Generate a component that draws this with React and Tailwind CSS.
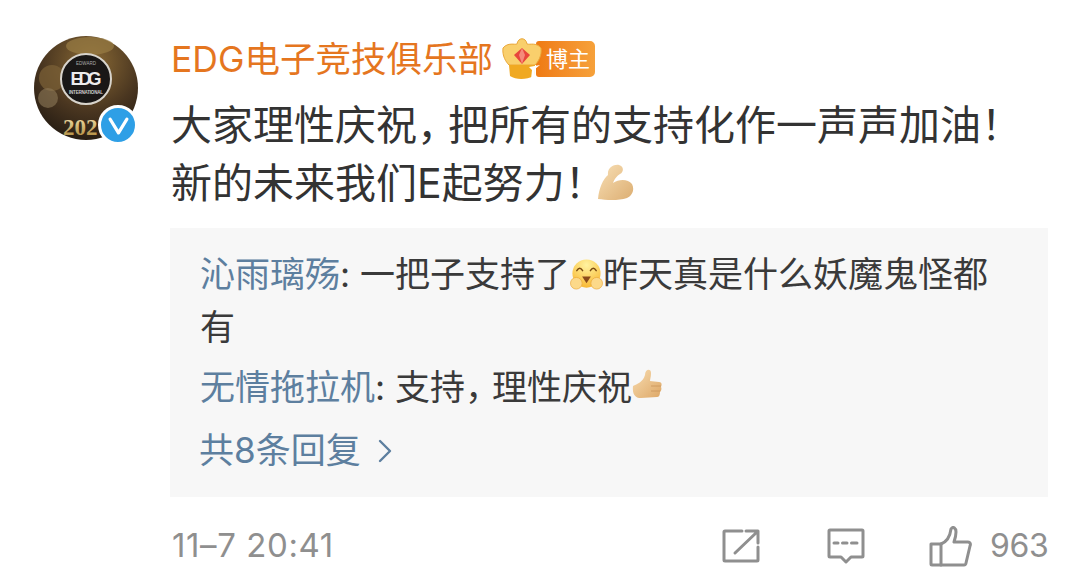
import React from "react";

const cjk = "font-['Inter','Noto_Sans_CJK_SC',sans-serif]";

function Avatar() {
  return (
    <div className="relative w-[104px] h-[104px] shrink-0">
      <svg viewBox="0 0 104 104" className="w-[104px] h-[104px]">
        <defs>
          <radialGradient id="bg" cx="0.55" cy="0.25" r="0.85">
            <stop offset="0" stopColor="#8a6a35" />
            <stop offset="0.55" stopColor="#4a3620" />
            <stop offset="1" stopColor="#1d1610" />
          </radialGradient>
          <linearGradient id="gold" x1="0" y1="0" x2="0" y2="1">
            <stop offset="0" stopColor="#f6e7b4" />
            <stop offset="1" stopColor="#a9802f" />
          </linearGradient>
        </defs>
        <circle cx="52" cy="52" r="52" fill="url(#bg)" />
        <circle cx="18" cy="42" r="13" fill="#7d6238" opacity="0.7" />
        <circle cx="14" cy="62" r="10" fill="#8d7a58" opacity="0.6" />
        <ellipse cx="56" cy="10" rx="24" ry="9" fill="#9a7e45" opacity="0.7" />
        <circle cx="52" cy="43" r="25" fill="#191716" stroke="#d8d4cc" strokeWidth="2" />
        <text x="52" y="29" textAnchor="middle" fontSize="4.5" fill="#aaa" fontFamily="Liberation Sans">
          EDWARD
        </text>
        <text x="52" y="49" textAnchor="middle" fontSize="18" fontWeight="700" fill="#ececec" fontFamily="Liberation Sans" textLength="31">
          EDG
        </text>
        <text x="52" y="58" textAnchor="middle" fontSize="4.5" fontWeight="700" fill="#ccc" fontFamily="Liberation Sans" textLength="34">
          INTERNATIONAL
        </text>
        <text x="29" y="99" fontSize="23" fontWeight="700" fill="url(#gold)" fontFamily="Liberation Serif">
          202
        </text>
      </svg>
      <div className="absolute left-[64px] top-[69px] w-[40px] h-[40px] rounded-full bg-[#2e9fe6] border-[3px] border-white flex items-center justify-center">
        <svg viewBox="0 0 24 24" className="w-[25px] h-[25px]" fill="none" stroke="white" strokeWidth="3.2" strokeLinecap="round" strokeLinejoin="round">
          <path d="M4 6 L12 19 L20 6" />
        </svg>
      </div>
    </div>
  );
}

function Crown() {
  return (
    <svg viewBox="0 0 40 45" className="w-[40px] h-[45px] -mr-[6px] mt-[-4px] relative z-10 shrink-0">
      <path d="M1 12 C6 6 13 9 15 8 C16 1 24 1 25 8 C28 9 34 6 39 12 C40 20 36 26 33 29 L7 29 C4 26 0 20 1 12Z" fill="#f9cf6c" stroke="#eaa73a" />
      <path d="M7 29 H33 L32 40 C24 44 14 44 8 40Z" fill="#f0a922" />
      <path d="M20 12 L28 19 L20 28 L12 19Z" fill="#e8453c" />
      <path d="M20 12 L23 19 L20 28 L17 19Z" fill="#f58a7a" />
      <path d="M27 31 L38 29 L33 33 L32 43 L29 43 L30 34Z" fill="#fff" />
    </svg>
  );
}

function Muscle() {
  return (
    <svg viewBox="0 0 38 36" className="w-[38px] h-[36px] ml-[18px] mt-[-2px]">
      <defs>
        <linearGradient id="arm" x1="0" y1="0" x2="1" y2="1">
          <stop offset="0" stopColor="#f8dfb5" />
          <stop offset="1" stopColor="#dcae72" />
        </linearGradient>
      </defs>
      <path d="M1 35 C2 24 6 15 11 11 C10 4 17 0 22 1 C27 2 27 8 23 10 C20 12 18 14 16 19 C22 15 31 15 35 20 C38 26 35 32 30 34 C21 37 9 36 1 35Z" fill="url(#arm)" />
    </svg>
  );
}

function Hug() {
  return (
    <svg viewBox="0 0 34 34" className="inline-block w-[33px] h-[33px] align-[-5px]">
      <defs>
        <radialGradient id="face" cx="0.5" cy="0.2" r="0.85">
          <stop offset="0" stopColor="#fff3a0" />
          <stop offset="1" stopColor="#f8b52e" />
        </radialGradient>
      </defs>
      <circle cx="17" cy="15" r="14.5" fill="url(#face)" />
      <path d="M7 12 Q10 7 13 12 M21 12 Q24 7 27 12" fill="none" stroke="#7a4a12" strokeWidth="1.5" strokeLinecap="round" />
      <path d="M12.5 18 H21.5 L17 25Z" fill="#8a4a1a" />
      <ellipse cx="6.5" cy="25" rx="6" ry="6" fill="#fcd98a" stroke="#eaa73a" strokeWidth="0.7" />
      <ellipse cx="27.5" cy="25" rx="6" ry="6" fill="#fcd98a" stroke="#eaa73a" strokeWidth="0.7" />
    </svg>
  );
}

function ThumbEmoji() {
  return (
    <svg viewBox="0 0 30 30" className="inline-block w-[30px] h-[30px] align-[1px]">
      <defs>
        <linearGradient id="hand" x1="0" y1="0" x2="1" y2="1">
          <stop offset="0" stopColor="#f8dcb0" />
          <stop offset="1" stopColor="#dda766" />
        </linearGradient>
      </defs>
      <path d="M1 17 C5 15 11 13 13 6 C13 0 19 -1 19 4 C19 8 18 10 18 12 L27 13 C30 13 30 16 29 18 C30 20 29 22 28 23 C28 26 27 28 25 28 L9 29 C4 29 0 26 1 17Z" fill="url(#hand)" />
      <path d="M19 17 H29 M19 22 H28" stroke="#c9965c" strokeWidth="0.8" fill="none" />
    </svg>
  );
}

function ShareIcon() {
  return (
    <svg viewBox="0 0 38 34" className="w-[38px] h-[34px]" fill="none" stroke="#8f8f8f" strokeWidth="3" strokeLinecap="round" strokeLinejoin="round">
      <path d="M20 2 H3 Q2 2 2 3 V31 Q2 32 3 32 H35 Q36 32 36 31 V18" />
      <path d="M13 24 L35 3 M24 2 H36 V14" />
    </svg>
  );
}

function CommentIcon() {
  return (
    <svg viewBox="0 0 38 36" className="w-[38px] h-[36px]" fill="none" stroke="#8f8f8f" strokeWidth="3" strokeLinecap="round" strokeLinejoin="round">
      <path d="M3 2 H35 Q36 2 36 3 V28 Q36 29 35 29 H24 L19 34 L14 29 H3 Q2 29 2 28 V3 Q2 2 3 2Z" />
      <path d="M7 15 H11 M15.5 15 H20 M24.5 15 H30" />
    </svg>
  );
}

function LikeIcon() {
  return (
    <svg viewBox="0 0 43 41" className="w-[43px] h-[41px]" fill="none" stroke="#8f8f8f" strokeWidth="3" strokeLinecap="round" strokeLinejoin="round">
      <path d="M2 18 H12 V39 H3 Q2 39 2 38Z" />
      <path d="M12 18 C17 16 21 11 22 3 C24 0 27 2 27 6 C27 10 26 13 25 16 H39 C41 16 42 18 41 20 L37 37 C37 38 36 39 35 39 H12" />
    </svg>
  );
}

export default function App() {
  return (
    <div className={`w-[1080px] h-[588px] bg-white overflow-hidden flex pl-[34px] pt-[36px] ${cjk}`}>
      <Avatar />
      <div className="ml-[32px] flex-1 mr-[32px] flex flex-col">
        <div className="flex items-center h-[48px] pl-[1px]">
          <span className="text-[35.5px] leading-[48px] text-[#e5761f] whitespace-nowrap">EDG电子竞技俱乐部</span>
          <span className="flex items-center ml-[9px]">
            <Crown />
            <span className="h-[36px] w-[59px] -mt-[2px] rounded-r-[5px] rounded-l-[3px] bg-gradient-to-r from-[#ef7a12] to-[#f6a13a] text-white text-[22px] leading-[36px] pl-[10px]">
              博主
            </span>
          </span>
        </div>
        <div className="mt-[12px] text-[41px] leading-[58px] text-[#333333] pl-[1px]">
          <div className="whitespace-nowrap">大家理性庆祝<span className="tracking-[-10px]">，</span>把所有的支持化作一声声加油！</div>
          <div className="flex items-center">
            <span className="whitespace-nowrap w-[408px]">新的未来我们E起努力！</span>
            <Muscle />
          </div>
        </div>
        <div className="mt-[16px] h-[269px] bg-[#f7f7f7] pl-[30px] pt-[20px] text-[35px] text-[#3a3a3a]">
          <div className="h-[106px] leading-[53px]">
            <span className="text-[#5d7f9f]">沁雨璃殇</span>: 一把子支持了<Hug />昨天真是什么妖魔鬼怪都
            <br />
            有
          </div>
          <div className="h-[53px] leading-[53px] mt-[7px] whitespace-nowrap">
            <span className="text-[#5d7f9f]">无情拖拉机</span>: 支持<span className="tracking-[-8px]">，</span>理性庆祝<ThumbEmoji />
          </div>
          <div className="flex items-center mt-[10px] leading-[53px] text-[#5d7f9f] -ml-[1px]">
            共8条回复
            <svg viewBox="0 0 14 24" className="w-[14px] h-[24px] ml-[17px]" fill="none" stroke="#5d7f9f" strokeWidth="2.4" strokeLinecap="round" strokeLinejoin="round">
              <path d="M2 2 L12 12 L2 22" />
            </svg>
          </div>
        </div>
        <div className="flex items-center h-[50px] mt-[24px] text-[#8f8f8f]">
          <span className="text-[33px] tracking-[0.6px] pl-[2px] whitespace-nowrap">11–7 20:41</span>
          <span className="flex-1" />
          <span className="flex items-center"><ShareIcon /></span>
          <span className="ml-[67px] flex items-center"><CommentIcon /></span>
          <span className="ml-[64px] flex items-center"><LikeIcon /></span>
          <span className="ml-[18px] w-[58px] text-[32px] tracking-[-0.3px] whitespace-nowrap">963</span>
        </div>
      </div>
    </div>
  );
}
